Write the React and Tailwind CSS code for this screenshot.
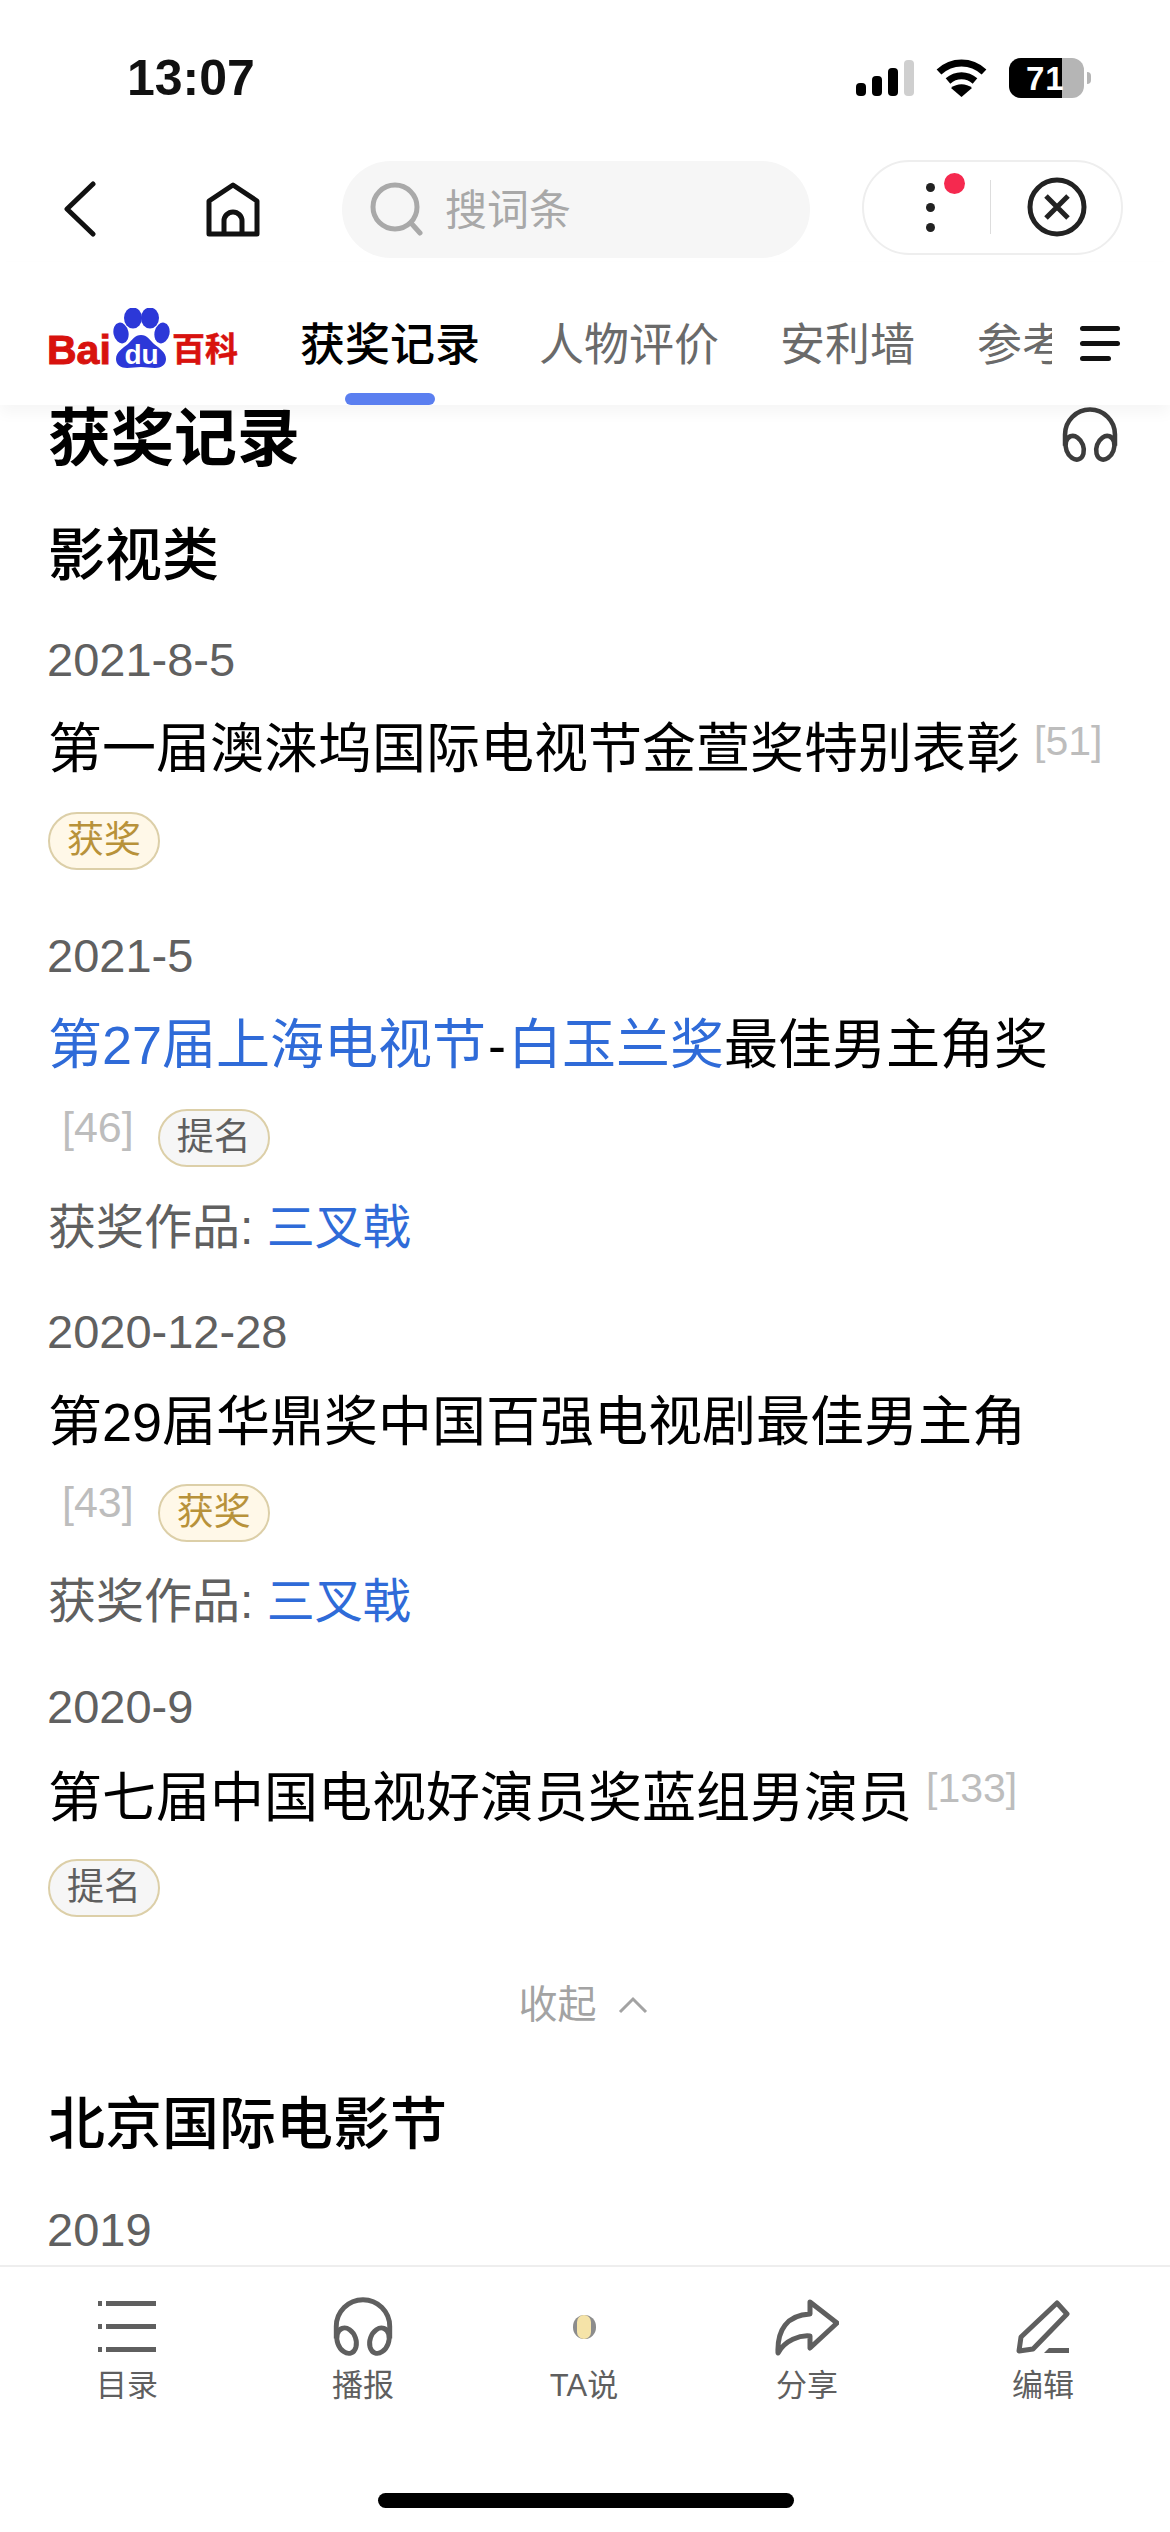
import React from "react";

const font = { fontFamily: '"Liberation Sans", "Noto Sans CJK SC", sans-serif' };

const Ref = ({ children, className = "" }) => (
  <span className={`leading-none text-[#bdbdbd] ${className}`}>{children}</span>
);

const Tag = ({ children, gold }) => (
  <span
    className={`flex items-center justify-center w-[112px] h-[58px] rounded-full border-2 border-[#dccfa8] text-[37px] ${
      gold ? "bg-[#fff8e8] text-[#b8923a]" : "bg-[#f6f6f6] text-[#5f5f5f]"
    }`}
  >
    {children}
  </span>
);

const Date = ({ children, className = "" }) => (
  <div className={`h-[60px] leading-[60px] text-[47px] text-[#606060] -ml-[1px] ${className}`}>{children}</div>
);

const Line = ({ children, className = "" }) => (
  <div className={`h-[60px] flex items-center whitespace-nowrap text-[54px] text-black ${className}`}>{children}</div>
);

const Work = ({ className = "" }) => (
  <div className={`h-[60px] leading-[60px] text-[48px] text-[#606060] ${className}`}>
    获奖作品: <span className="text-[#2f6bd8]">三叉戟</span>
  </div>
);

const Back = () => (
  <svg width="36" height="56" viewBox="0 0 36 56" fill="none" stroke="#111" strokeWidth="5" strokeLinecap="round" strokeLinejoin="round">
    <path d="M31 3 5 28l26 25" />
  </svg>
);

const Home = () => (
  <svg width="56" height="56" viewBox="0 0 56 56" fill="none" stroke="#111" strokeWidth="5" strokeLinejoin="round">
    <path d="M29 4 53 20v33H5V20Z" />
    <path d="M20 53V40a9 9 0 0 1 18 0v13" />
  </svg>
);

const Headphones = ({ size, color, sw }) => (
  <svg width={size} height={size} viewBox="0 0 55 55" fill="none" stroke={color} strokeWidth={sw}>
    <path d="M3 38V27a24.500 24.500 0 0 1 49 0v11" />
    <ellipse cx="12.500" cy="40" rx="8.500" ry="12" transform="rotate(-20 12.500 40)" />
    <ellipse cx="42.500" cy="40" rx="8.500" ry="12" transform="rotate(20 42.500 40)" />
  </svg>
);

const Logo = () => (
  <div className="flex items-end w-[191px] h-[60px] shrink-0">
    <span className="text-[41px] leading-[36px] font-bold text-[#d8120e] w-[67px] [-webkit-text-stroke:1px_#d8120e]">Bai</span>
    <svg width="57" height="60" viewBox="0 0 57 60" className="shrink-0">
      <g fill="#2c38d8">
        <ellipse cx="20" cy="10" rx="9" ry="10.500" />
        <ellipse cx="37" cy="10" rx="9" ry="10.500" />
        <ellipse cx="8" cy="25" rx="7.500" ry="10.500" transform="rotate(-12 8 25)" />
        <ellipse cx="49" cy="25" rx="7.500" ry="10.500" transform="rotate(12 49 25)" />
        <path d="M28 27c6 0 9 5 13 9 5 4 12 8 12 15 0 6-5 9-11 9-5 0-9-1-14-1s-9 1-14 1c-6 0-11-3-11-9 0-7 7-11 12-15 4-4 7-9 13-9Z" />
      </g>
      <text x="28.500" y="56" textAnchor="middle" fill="#fff" fontSize="28" fontWeight="700" fontFamily="Liberation Sans">du</text>
    </svg>
    <span className="text-[33px] leading-[36px] font-bold text-[#d8120e] ml-[2px] whitespace-nowrap [-webkit-text-stroke:0.5px_#d8120e]">百科</span>
  </div>
);

const NavItem = ({ label, className = "", children }) => (
  <div className={`w-[80px] flex flex-col items-center text-[#5f5f5f] ${className}`}>
    <div className="h-[60px] flex items-center justify-center">{children}</div>
    <div className="mt-[9px] text-[31px] leading-[40px] whitespace-nowrap">{label}</div>
  </div>
);

export default function App() {
  return (
    <div style={font} className="w-[1170px] h-[2532px] bg-white flex flex-col overflow-hidden">
      {/* status bar */}
      <div className="h-[156px] shrink-0 flex items-center justify-between pl-[127px] pr-[79px]">
        <span className="text-[50px] font-bold leading-none text-[#111]">13:07</span>
        <div className="flex items-center">
          <svg width="58" height="36" viewBox="0 0 58 36" fill="#000">
            <rect x="0" y="23" width="10" height="13" rx="4" />
            <rect x="16" y="16" width="10" height="20" rx="4" />
            <rect x="32" y="8" width="10" height="28" rx="4" />
            <rect x="48" y="0" width="10" height="36" rx="4" fill="#cfcfcf" />
          </svg>
          <svg width="51" height="38" viewBox="0 0 51 38" className="ml-[22px]" fill="none" stroke="#000" strokeWidth="7">
            <path d="M3 13C16 1 35 1 48 13" />
            <path d="M12 22c8-7 19-7 27 0" />
            <path d="M25.500 38 15 29c6-5 15-5 21 0Z" fill="#000" stroke="none" />
          </svg>
          <div className="ml-[22px] relative w-[75px] h-[40px] rounded-[12px] overflow-hidden bg-[#b5b5b5]">
            <div className="absolute left-0 top-0 bottom-0 w-[53px] bg-black" />
            <span className="absolute left-[17px] top-[4px] text-[33px] leading-[33px] font-bold text-white tracking-[1px]">71</span>
          </div>
          <div className="ml-[3px] w-[4px] h-[12px] rounded-r-full bg-[#b5b5b5]" />
        </div>
      </div>

      {/* nav row */}
      <div className="h-[106px] shrink-0 flex items-center pl-[62px]">
        <Back />
        <div className="ml-[106px]"><Home /></div>
        <div className="ml-[82px] w-[468px] h-[97px] rounded-full bg-[#f6f6f6] flex items-center pl-[28px]">
          <svg width="54" height="54" viewBox="0 0 54 54" fill="none" stroke="#a9a9a9" strokeWidth="5" strokeLinecap="round">
            <circle cx="25" cy="25" r="22" />
            <path d="m41 41 9 10" />
          </svg>
          <span className="ml-[21px] text-[42px] text-[#a8a8a8] mt-[2px]">搜词条</span>
        </div>
        <div className="ml-[52px] -mt-[4px] relative w-[261px] h-[95px] rounded-full border-2 border-[#eeeeee] flex items-center">
          <div className="ml-[62px] flex flex-col gap-[11px]">
            <span className="w-[9px] h-[9px] rounded-full bg-[#222]" />
            <span className="w-[9px] h-[9px] rounded-full bg-[#222]" />
            <span className="w-[9px] h-[9px] rounded-full bg-[#222]" />
          </div>
          <span className="absolute left-[80px] top-[11px] w-[21px] h-[21px] rounded-full bg-[#f5294f]" />
          <span className="ml-[55px] w-[1px] h-[54px] bg-[#dddddd]" />
          <svg width="60" height="60" viewBox="0 0 60 60" className="ml-[36px]" fill="none" stroke="#222" strokeWidth="5">
            <circle cx="30" cy="30" r="27" />
            <path d="m19 19 22 22M41 19 19 41" />
          </svg>
        </div>
      </div>

      {/* tabs */}
      <div className="relative z-10 h-[143px] shrink-0 bg-white shadow-[0_8px_14px_rgba(0,0,0,0.04)] flex pl-[47px] pt-[46px]">
        <Logo />
        <div className="ml-[62px] w-[752px] overflow-hidden flex gap-[59px] pt-[11px] text-[45px] leading-[54px] text-[#6a6a6a] whitespace-nowrap">
          <span className="font-medium text-black">获奖记录</span>
          <span>人物评价</span>
          <span className="ml-[2px]">安利墙</span>
          <span className="ml-[3px]">参考资料</span>
        </div>
        <div className="ml-[28px] mt-[18px] w-[40px] flex flex-col gap-[10px]">
          <span className="h-[5px] rounded-full bg-[#111]" />
          <span className="h-[5px] rounded-full bg-[#111]" />
          <span className="h-[5px] w-[31px] rounded-full bg-[#111]" />
        </div>
        <span className="absolute left-[345px] bottom-0 w-[90px] h-[12px] rounded-full bg-[#5b7ff0]" />
      </div>

      {/* content */}
      <div className="flex-1 overflow-hidden pl-[48px] pr-[52px]">
        <div className="h-[60px] flex items-center justify-between">
          <span className="text-[63px] font-bold text-black leading-none mt-[6px]">获奖记录</span>
          <Headphones size={56} color="#3c3c3c" sw={4.500} />
        </div>
        <div className="mt-[60px] h-[60px] leading-[60px] text-[57px] font-medium text-black">影视类</div>

        <Date className="mt-[45px]">2021-8-5</Date>
        <Line className="mt-[29px]">
          第一届澳涞坞国际电视节金萱奖特别表彰
          <Ref className="text-[41px] ml-[14px] -mt-[16px]">[51]</Ref>
        </Line>
        <div className="mt-[33px]"><Tag gold>获奖</Tag></div>

        <Date className="mt-[56px]">2021-5</Date>
        <Line className="mt-[29px]">
          <span className="text-[#2f6bd8]">第27届上海电视节</span>
          <span className="mx-[2px]">-</span>
          <span className="text-[#2f6bd8]">白玉兰奖</span>最佳男主角奖
        </Line>
        <div className="mt-[33px] h-[60px] flex items-center">
          <Ref className="text-[43px] ml-[14px] -mt-[22px]">[46]</Ref>
          <span className="ml-[24px]"><Tag>提名</Tag></span>
        </div>
        <Work className="mt-[30px]" />

        <Date className="mt-[44px]">2020-12-28</Date>
        <Line className="mt-[30px]">第29届华鼎奖中国百强电视剧最佳男主角</Line>
        <div className="mt-[31px] h-[60px] flex items-center">
          <Ref className="text-[43px] ml-[14px] -mt-[22px]">[43]</Ref>
          <span className="ml-[24px]"><Tag gold>获奖</Tag></span>
        </div>
        <Work className="mt-[29px]" />

        <Date className="mt-[45px]">2020-9</Date>
        <Line className="mt-[31px]">
          第七届中国电视好演员奖蓝组男演员
          <Ref className="text-[41px] ml-[14px] -mt-[20px]">[133]</Ref>
        </Line>
        <div className="mt-[31px]"><Tag>提名</Tag></div>

        <div className="mt-[58px] h-[60px] flex items-center justify-center text-[39px] text-[#a3a3a3]">
          收起
          <svg width="30" height="18" viewBox="0 0 30 18" className="ml-[21px]" fill="none" stroke="#a3a3a3" strokeWidth="3">
            <path d="M2 16 15 3l13 13" />
          </svg>
        </div>

        <div className="mt-[59px] h-[60px] leading-[60px] text-[57px] font-medium text-black">北京国际电影节</div>
        <Date className="mt-[46px]">2019</Date>
      </div>

      {/* bottom bar */}
      <div className="h-[267px] shrink-0 border-t-2 border-[#eeeeee] pt-[30px] relative">
        <div className="flex pl-[87px]">
          <NavItem label="目录">
            <svg width="58" height="52" viewBox="0 0 58 52" fill="#5f5f5f">
              <rect x="0" y="0" width="4" height="5" />
              <rect x="8" y="0" width="50" height="5" />
              <rect x="0" y="23" width="4" height="5" />
              <rect x="8" y="23" width="50" height="5" />
              <rect x="0" y="46" width="4" height="5" />
              <rect x="8" y="46" width="50" height="5" />
            </svg>
          </NavItem>
          <NavItem label="播报" className="ml-[156px]">
            <Headphones size={60} color="#5f5f5f" sw={4.500} />
          </NavItem>
          <NavItem label="TA说" className="ml-[141px]">
            <span className="w-[23px] h-[24px] rounded-full bg-[#8c8c8c] flex items-center justify-center">
              <span className="w-[14px] h-[24px] rounded-full bg-[#f5e3a8]" />
            </span>
          </NavItem>
          <NavItem label="分享" className="ml-[143px]">
            <svg width="64" height="58" viewBox="0 0 64 58" fill="none" stroke="#5f5f5f" strokeWidth="5" strokeLinejoin="round">
              <path d="M35 4 62 25 35 50V38C25 37 10 42 3 55 2 32 12 17 35 16Z" />
            </svg>
          </NavItem>
          <NavItem label="编辑" className="ml-[156px]">
            <svg width="54" height="54" viewBox="0 0 54 54">
              <path d="M41 3 51 14 17 49 3 51 5 37Z" fill="none" stroke="#5f5f5f" strokeWidth="5" strokeLinejoin="round" />
              <path d="M33 48h20v5H28Z" fill="#5f5f5f" />
            </svg>
          </NavItem>
        </div>
        <div className="absolute left-[378px] top-[226px] w-[416px] h-[15px] rounded-full bg-black" />
      </div>
    </div>
  );
}
